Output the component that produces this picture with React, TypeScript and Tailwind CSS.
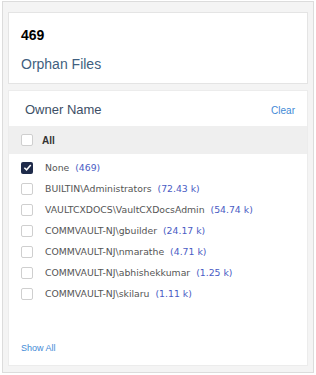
const owners = [
  { name: 'BUILTIN\\Administrators', count: '(72.43 k)' },
  { name: 'VAULTCXDOCS\\VaultCXDocsAdmin', count: '(54.74 k)' },
  { name: 'COMMVAULT-NJ\\gbuilder', count: '(24.17 k)' },
  { name: 'COMMVAULT-NJ\\nmarathe', count: '(4.71 k)' },
  { name: 'COMMVAULT-NJ\\abhishekkumar', count: '(1.25 k)' },
  { name: 'COMMVAULT-NJ\\skilaru', count: '(1.11 k)' },
];

const Box = ({ checked }: { checked?: boolean }) =>
  checked ? (
    <span className="flex h-[12px] w-[12px] shrink-0 items-center justify-center rounded-[2px] bg-[#1f2b4a]">
      <svg width="9" height="9" viewBox="0 0 10 10">
        <path d="M1.5 5.2 L4 7.6 L8.6 2.2" fill="none" stroke="white" strokeWidth="1.7" />
      </svg>
    </span>
  ) : (
    <span className="h-[12px] w-[12px] shrink-0 rounded-[2px] border border-[#cfcfcf] bg-white" />
  );

const App = () => {
  return (
    <div className="h-[375px] w-[316px] bg-white px-[2px] pt-[1px] pb-[2px] font-['Liberation_Sans',Arial,sans-serif]">
      <div className="flex h-full flex-col gap-[6px] border border-[#dcdcdc] bg-[#f4f4f4] px-[5px] pt-[10px] pb-[6px]">
        <div className="h-[72px] border border-[#e4e4e4] bg-white px-[12px] pt-[12px]">
          <p className="text-[14px] leading-[20px] font-bold text-black">469</p>
          <p className="mt-[9px] text-[14px] leading-[20px] text-[#3f5f80]">Orphan Files</p>
        </div>
        <div className="flex flex-1 flex-col border border-[#ececec] bg-white">
          <div className="flex items-center justify-between pt-[10px] pr-[12px] pl-[16px]">
            <span className="text-[13px] leading-[18px] text-[#3d4f66]">Owner Name</span>
            <span className="text-[10px] text-[#3f8ad6]">Clear</span>
          </div>
          <div className="mt-[7px] flex h-[28px] items-center gap-[9px] bg-[#efefef] pl-[12px]">
            <Box />
            <span className="text-[10px] font-bold text-[#333]">All</span>
          </div>
          <div className="mt-[3px] flex flex-col font-['DejaVu_Sans',Verdana,sans-serif]">
            <div className="flex h-[21px] items-center gap-[12px] pl-[12px]">
              <Box checked />
              <span className="text-[9.3px] text-[#555]">
                None <span className="ml-[3px] text-[#4a5cc4]">(469)</span>
              </span>
            </div>
            {owners.map((o, key) => (
              <div key={key} className="flex h-[21px] items-center gap-[12px] pl-[12px]">
                <Box />
                <span className="text-[9.3px] text-[#555]">
                  {o.name} <span className="ml-[3px] text-[#4a5cc4]">{o.count}</span>
                </span>
              </div>
            ))}
          </div>
          <div className="mt-auto pb-[10px] pl-[12px] text-[9px] text-[#3f8ad6]">Show All</div>
        </div>
      </div>
    </div>
  );
};

export default App;
